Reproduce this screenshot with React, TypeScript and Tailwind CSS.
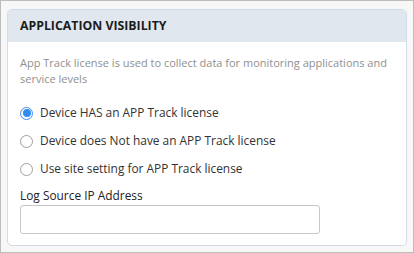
import React from 'react';

const options = [
  { id: 'has', label: 'Device HAS an APP Track license', checked: true },
  { id: 'not', label: 'Device does Not have an APP Track license', checked: false },
  { id: 'site', label: 'Use site setting for APP Track license', checked: false },
];

function Radio({ checked }: { checked: boolean }) {
  return checked ? (
    <span className="inline-flex h-[13px] w-[13px] shrink-0 items-center justify-center rounded-full border border-[#3b8ee8] bg-white">
      <span className="h-[8px] w-[8px] rounded-full bg-[#2f8cf0]" />
    </span>
  ) : (
    <span className="inline-block h-[13px] w-[13px] shrink-0 rounded-full border border-[#a0a0a0] bg-white" />
  );
}

export default function App() {
  return (
    <div
      className="h-[253px] w-[414px] border border-[#bdbdbd] bg-[#f7f7f7] px-[6px] pt-[8px] pb-[6px]"
      style={{ fontFamily: '"Open Sans", "Liberation Sans", sans-serif' }}
    >
      <div className="flex h-full flex-col overflow-hidden rounded-[5px] border border-[#d3dce6] bg-white">
        <div className="flex h-[32px] shrink-0 items-center bg-[#e1e7ef] px-[12px]">
          <span className="text-[12.3px] font-bold text-[#1c1c1c]">APPLICATION VISIBILITY</span>
        </div>
        <div className="px-[12px] pt-[13px]">
          <p className="text-[11px] leading-[16px] text-[#8f8f8f]">
            App Track license is used to collect data for monitoring applications and service levels
          </p>
          <div className="mt-[16px] flex flex-col gap-[8px]">
            {options.map((o) => (
              <label key={o.id} className="flex h-[20px] items-center gap-[7px] text-[11.9px] text-[#333]">
                <Radio checked={o.checked} />
                <span>{o.label}</span>
              </label>
            ))}
          </div>
          <div className="mt-[7px] text-[11.9px] leading-[18px] text-[#222]">Log Source IP Address</div>
          <input
            type="text"
            className="mt-[1px] h-[29px] w-[300px] rounded-[3px] border border-[#c8c8c8] bg-white px-2 text-[12px] outline-none"
          />
        </div>
      </div>
    </div>
  );
}
